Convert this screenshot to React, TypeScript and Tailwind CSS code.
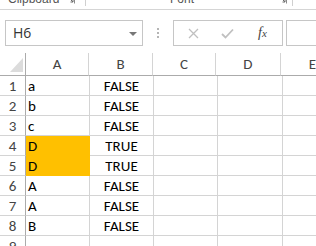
import React from "react";

const cellFont = { fontFamily: '"Carlito", "Lato", "Liberation Sans", sans-serif' };

const rows: { n: number; a: string; b: string; fill?: boolean }[] = [
    { n: 1, a: "a", b: "FALSE" },
    { n: 2, a: "b", b: "FALSE" },
    { n: 3, a: "c", b: "FALSE" },
    { n: 4, a: "D", b: "TRUE", fill: true },
    { n: 5, a: "D", b: "TRUE", fill: true },
    { n: 6, a: "A", b: "FALSE" },
    { n: 7, a: "A", b: "FALSE" },
    { n: 8, a: "B", b: "FALSE" },
    { n: 9, a: "", b: "" },
];

// little "dialog launcher" square in the ribbon group captions
function Launcher() {
    return (
        <svg width="8" height="8" viewBox="0 0 8 8" className="block">
            <path d="M0.5 0.5 H7.5 V7.5" fill="none" stroke="#8a8a8a" strokeWidth="1" />
            <path d="M2 2 L6 6 M6 3.5 V6 H3.5" fill="none" stroke="#6a6a6a" strokeWidth="1" />
        </svg>
    );
}

export default function App() {
    return (
        <div className="w-[316px] h-[246px] overflow-hidden bg-white text-[#333]">
            {/* ribbon group captions, cut off at the top */}
            <div className="h-[10px] border-b border-[#d5d5d5] flex overflow-hidden text-[12px] text-[#555] font-['Liberation_Sans',sans-serif]">
                <div className="w-[86px] flex items-start">
                    <span className="ml-[8px] -mt-[8px] leading-[14px]">Clipboard</span>
                    <span className="ml-[8px] -mt-[4px]"><Launcher /></span>
                    <span className="ml-auto w-px h-[6px] bg-[#d0d0d0]" />
                </div>
                <div className="w-[207px] flex items-start">
                    <span className="ml-[84px] -mt-[8px] leading-[14px]">Font</span>
                    <span className="ml-auto mr-[5px] -mt-[4px]"><Launcher /></span>
                    <span className="w-px h-[6px] bg-[#d0d0d0]" />
                </div>
            </div>

            {/* formula bar */}
            <div className="mt-[10px] h-[26px] flex items-stretch">
                <div className="ml-[5px] w-[138px] border border-[#c6c6c6] flex items-center pl-[7px] pr-[5px]">
                    <span className="text-[14px] text-[#333] font-['Open_Sans',sans-serif] leading-none">H6</span>
                    <svg width="8" height="4" viewBox="0 0 8 4" className="ml-auto mt-[2px]">
                        <path d="M0 0 H8 L4 4 Z" fill="#777" />
                    </svg>
                </div>
                <div className="w-[30px] flex flex-col items-center justify-center gap-[2px]">
                    <span className="w-[2px] h-[2px] bg-[#b5b5b5]" />
                    <span className="w-[2px] h-[2px] bg-[#b5b5b5]" />
                    <span className="w-[2px] h-[2px] bg-[#b5b5b5]" />
                </div>
                <div className="w-[110px] border border-[#c6c6c6] flex items-center pl-[14px]">
                    <svg width="11" height="11" viewBox="0 0 11 11">
                        <path d="M1 1 L10 10 M10 1 L1 10" stroke="#c0c0c0" strokeWidth="1.3" />
                    </svg>
                    <svg width="13" height="11" viewBox="0 0 13 11" className="ml-[22px]">
                        <path d="M1 6 L4.5 9.5 L12 1.5" fill="none" stroke="#c0c0c0" strokeWidth="1.8" />
                    </svg>
                    <span className="ml-[24px] italic text-[14px] text-[#444] font-['Liberation_Serif',serif] leading-none">
                        f<span className="text-[11px]">x</span>
                    </span>
                </div>
                <div className="ml-[3px] flex-1 border border-r-0 border-[#c6c6c6]" />
            </div>

            {/* sheet */}
            <div className="mt-[7px]" style={cellFont}>
                <div className="flex h-[23px] text-[15px] text-[#444]">
                    <div className="w-[26px] border-r border-b border-[#ababab] relative">
                        <svg width="13" height="14" viewBox="0 0 13 14" className="absolute left-[10px] top-[5px]">
                            <path d="M13 0 V14 H0 Z" fill="#dcdcdc" />
                        </svg>
                    </div>
                    <div className="w-[64px] border-r border-[#d4d4d4] border-b-[#ababab] border-b flex items-end justify-center pb-[3px] leading-none">A</div>
                    <div className="w-[64px] border-r border-[#d4d4d4] border-b-[#ababab] border-b flex items-end justify-center pb-[3px] leading-none">B</div>
                    <div className="w-[64px] border-r border-[#d4d4d4] border-b-[#ababab] border-b flex items-end justify-center pb-[3px] leading-none">C</div>
                    <div className="w-[65px] border-r border-[#d4d4d4] border-b-[#ababab] border-b flex items-end justify-center pb-[3px] leading-none">D</div>
                    <div className="flex-1 border-b border-[#ababab] flex items-end pl-[28px] pb-[3px] leading-none">E</div>
                </div>
                {rows.map(r => (
                    <div key={r.n} className="flex h-[20px] text-[15px] leading-none">
                        <div className="w-[26px] border-r border-r-[#ababab] border-b border-b-[#d4d4d4] flex items-end justify-center pb-[1px] text-[#444]">{r.n}</div>
                        <div className={r.fill
                            ? "w-[64px] bg-[#ffc000] border-r border-b border-[#ffc000] flex items-end pl-[2px] pb-[1px] text-black"
                            : "w-[64px] border-r border-b border-[#d4d4d4] flex items-end pl-[2px] pb-[1px] text-black"}>{r.a}</div>
                        <div className="w-[64px] border-r border-b border-[#d4d4d4] flex items-end justify-center pb-[1px] text-black">{r.b}</div>
                        <div className="w-[64px] border-r border-b border-[#d4d4d4]" />
                        <div className="w-[65px] border-r border-b border-[#d4d4d4]" />
                        <div className="flex-1 border-b border-[#d4d4d4]" />
                    </div>
                ))}
            </div>
        </div>
    );
}
